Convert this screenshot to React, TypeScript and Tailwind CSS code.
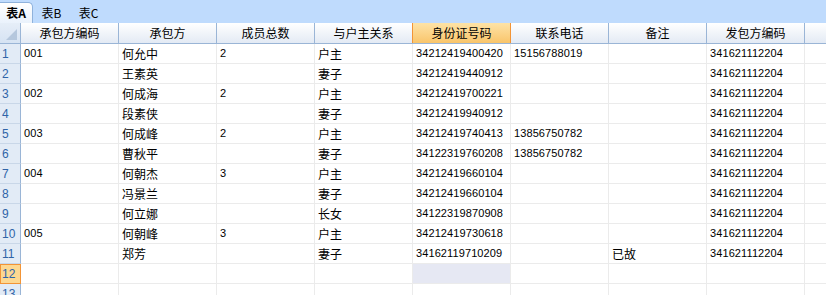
import React from "react";

const headers = ["承包方编码", "承包方", "成员总数", "与户主关系", "身份证号码", "联系电话", "备注", "发包方编码", ""];

const rows: string[][] = [
  ["001", "何允中", "2", "户主", "34212419400420", "15156788019", "", "341621112204", ""],
  ["", "王素英", "", "妻子", "34212419440912", "", "", "341621112204", ""],
  ["002", "何成海", "2", "户主", "34212419700221", "", "", "341621112204", ""],
  ["", "段素侠", "", "妻子", "34212419940912", "", "", "341621112204", ""],
  ["003", "何成峰", "2", "户主", "34212419740413", "13856750782", "", "341621112204", ""],
  ["", "曹秋平", "", "妻子", "34122319760208", "13856750782", "", "341621112204", ""],
  ["004", "何朝杰", "3", "户主", "34212419660104", "", "", "341621112204", ""],
  ["", "冯景兰", "", "妻子", "34212419660104", "", "", "341621112204", ""],
  ["", "何立娜", "", "长女", "34122319870908", "", "", "341621112204", ""],
  ["005", "何朝峰", "3", "户主", "34212419730618", "", "", "341621112204", ""],
  ["", "郑芳", "", "妻子", "34162119710209", "", "已故", "341621112204", ""],
  ["", "", "", "", "", "", "", "", ""],
  ["", "", "", "", "", "", "", "", ""],
];

const isAscii = (s: string) => /^[\x00-\x7f]*$/.test(s);

function CellText({ v }: { v: string }) {
  if (!v) return null;
  if (isAscii(v))
    return <span className="text-[11px] font-['Liberation_Sans',sans-serif] tracking-[0.1px]">{v}</span>;
  return <span className="text-[12px] font-['Noto_Sans_CJK_SC',sans-serif]">{v}</span>;
}

function headerClass(i: number) {
  if (i === 4)
    return "w-[98px] shrink-0 border-r border-[#f29436] bg-gradient-to-b from-[#fde3a6] to-[#f9c56a] flex items-center justify-center text-[12px]";
  if (i === 3)
    return "w-[98px] shrink-0 border-r border-[#f29436] bg-gradient-to-b from-white to-[#e3eaf4] flex items-center justify-center text-[12px]";
  return "w-[98px] shrink-0 border-r border-[#9ab5d6] bg-gradient-to-b from-white to-[#e3eaf4] flex items-center justify-center text-[12px]";
}

export default function App() {
  return (
    <div className="w-[826px] h-[295px] overflow-hidden bg-white text-black font-['Noto_Sans_CJK_SC',sans-serif] leading-none">
      {/* tab bar */}
      <div className="h-[23px] bg-[#bfdbfd] flex items-end">
        <div className="h-[21px] w-[33px] rounded-tr-[5px] border border-b-0 border-l-0 border-[#8fb2dc] bg-gradient-to-b from-white to-[#eaf2fc] flex items-center justify-center">
          <span className="text-[12px] font-bold">表A</span>
        </div>
        <div className="h-[21px] w-[37px] flex items-center justify-center text-[12px]">表B</div>
        <div className="h-[21px] w-[37px] flex items-center justify-center text-[12px]">表C</div>
      </div>
      {/* header row */}
      <div className="flex h-[21px] border-b border-[#9ab5d6]">
        <div className="w-[21px] shrink-0 border-r border-[#9ab5d6] bg-gradient-to-b from-[#e6eef8] to-[#d6e3f3] relative">
          <div className="absolute right-[3px] bottom-[3px] w-0 h-0 border-l-[11px] border-l-transparent border-b-[11px] border-b-[#b5c7dd]"></div>
        </div>
        {headers.map((h, i) => (
          <div key={i} className={headerClass(i)}>
            {h}
          </div>
        ))}
      </div>
      {/* body */}
      {rows.map((r, ri) => (
        <div key={ri} className="flex h-[20px]">
          <div
            className={
              ri === 11
                ? "w-[21px] shrink-0 border border-[#f29436] bg-[#fdd891] text-[#2f64a8] text-[12px] font-['Liberation_Sans',sans-serif] flex items-center pl-[1px]"
                : "w-[21px] shrink-0 border-r border-[#9ab5d6] border-b border-b-[#c9d7e8] bg-[#e2ebf6] text-[#2f64a8] text-[12px] font-['Liberation_Sans',sans-serif] flex items-center pl-[2px]"
            }
          >
            {ri + 1}
          </div>
          {r.map((v, ci) => (
            <div
              key={ci}
              className={
                ri === 11 && ci === 4
                  ? "w-[98px] shrink-0 border-r border-b border-[#ebebeb] bg-[#e6e8f3] flex items-center pl-[3px] whitespace-nowrap overflow-hidden"
                  : "w-[98px] shrink-0 border-r border-b border-[#ebebeb] flex items-center pl-[3px] whitespace-nowrap overflow-hidden"
              }
            >
              <CellText v={v} />
            </div>
          ))}
        </div>
      ))}
    </div>
  );
}
